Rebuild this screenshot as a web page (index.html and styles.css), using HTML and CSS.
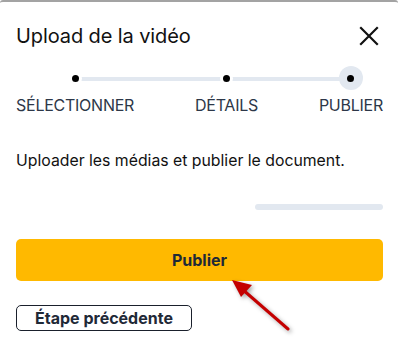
FILE: index.html
```html
<!DOCTYPE html>
<html>
<head>
  <title>Upload de la vidéo</title>
  <link rel="stylesheet" href="styles.css">
</head>
<body>
  <div class="modal">
    <div class="modal-header">
      <h2 class="modal-title">Upload de la vidéo</h2>
      <button class="close-btn" aria-label="Fermer">
        <svg width="20" height="20" viewBox="0 0 20 20">
          <path d="M2 2 L18 18 M18 2 L2 18" stroke="#111" stroke-width="2.2" stroke-linecap="square" fill="none"/>
        </svg>
      </button>
    </div>

    <div class="stepper">
      <div class="track"></div>
      <div class="step">
        <span class="dot"></span>
        <span class="step-label">Sélectionner</span>
      </div>
      <div class="step">
        <span class="dot"></span>
        <span class="step-label">Détails</span>
      </div>
      <div class="step active">
        <span class="dot"></span>
        <span class="step-label">Publier</span>
      </div>
    </div>

    <p class="description">Uploader les médias et publier le document.</p>

    <div class="progress-row">
      <div class="progress"></div>
    </div>

    <button class="btn-primary">Publier</button>
    <button class="btn-outline">Étape précédente</button>

    <!-- annotation arrow -->
    <svg class="arrow" width="80" height="70" viewBox="0 0 80 70">
      <line x1="58" y1="58" x2="12" y2="18" stroke="#c40000" stroke-width="3" stroke-linecap="round"/>
      <polygon points="2,9 22,14 11,26" fill="#c40000"/>
    </svg>
  </div>
</body>
</html>
```

FILE: styles.css
```css
body {
  margin: 0;
  background: #fff;
  font-family: 'Inter', 'Roboto', sans-serif;
  color: #111;
}

.modal {
  position: relative;
  height: 342px;
  border-top: 2px solid #a3a3a3;
  border-radius: 3px 3px 0 0;
  padding: 20px 15px 0 16px;
  box-sizing: border-box;
}

.modal-header {
  display: flex;
  justify-content: space-between;
  align-items: center;
  height: 28px;
}

.modal-title {
  margin: 0;
  font-size: 20px;
  font-weight: 400;
  letter-spacing: -0.1px;
}

.close-btn {
  border: none;
  background: none;
  padding: 0;
  margin-right: 4px;
  display: flex;
  cursor: pointer;
}

.stepper {
  position: relative;
  display: flex;
  justify-content: space-between;
  margin-top: 16px;
}

.track {
  position: absolute;
  top: 11px;
  left: 59px;
  right: 33px;
  height: 4px;
  border-radius: 2px;
  background: #e2e8f0;
}

.step {
  position: relative;
  display: flex;
  flex-direction: column;
  align-items: center;
}

.dot {
  width: 24px;
  height: 24px;
  display: flex;
  align-items: center;
  justify-content: center;
  border-radius: 50%;
}

.dot::after {
  content: '';
  width: 7px;
  height: 7px;
  border-radius: 50%;
  background: #000;
  box-shadow: 0 0 0 3px #fff;
}

.step.active .dot {
  background: #e2e8f0;
}

.step.active .dot::after {
  box-shadow: none;
}

.step-label {
  margin-top: 5px;
  font-size: 16px;
  line-height: 20px;
  text-transform: uppercase;
  color: #2d3748;
  letter-spacing: -0.25px;
}

.description {
  margin: 36px 0 0;
  font-size: 15.8px;
  line-height: 20px;
}

.progress-row {
  display: flex;
  justify-content: flex-end;
  margin-top: 33px;
}

.progress {
  width: 128px;
  height: 6px;
  border-radius: 3px;
  background: #e2e8f0;
}

.btn-primary {
  display: block;
  width: 100%;
  height: 42px;
  margin-top: 29px;
  border: none;
  border-radius: 5px;
  background: #ffb900;
  color: #1f2937;
  font-family: inherit;
  font-size: 16px;
  font-weight: 700;
  cursor: pointer;
}

.btn-outline {
  display: block;
  margin-top: 24px;
  width: 176px;
  height: 26px;
  border: 1.5px solid #1a202c;
  border-radius: 5px;
  background: #fff;
  color: #1f2937;
  font-family: inherit;
  font-size: 16px;
  font-weight: 700;
  cursor: pointer;
}

.arrow {
  position: absolute;
  left: 230px;
  top: 269px;
  filter: drop-shadow(2px 2px 2px rgba(0,0,0,0.35));
}
```
